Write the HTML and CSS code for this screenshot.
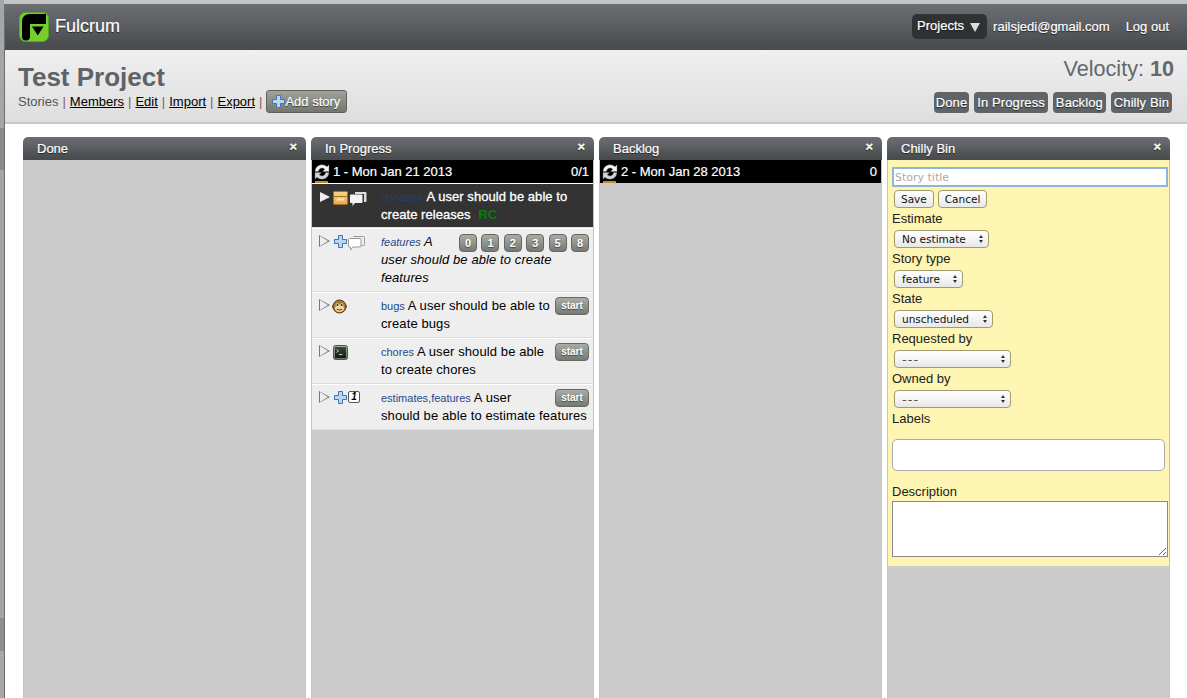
FILE: index.html
```html
<!DOCTYPE html>
<html lang="en">
<head>
    <meta charset="UTF-8">
    <meta name="viewport" content="width=device-width, initial-scale=1.0">
    <title>Test Project - Fulcrum</title>
    <link rel="stylesheet" href="styles.css">
</head>
<body>
    <svg class="defs" width="0" height="0">
        <defs>
            <linearGradient id="boxTop" x1="0" y1="0" x2="0" y2="1">
                <stop offset="0" stop-color="#fbd28a"/>
                <stop offset="1" stop-color="#e9a94f"/>
            </linearGradient>
            <linearGradient id="bezel" x1="0" y1="0" x2="0" y2="1">
                <stop offset="0" stop-color="#a8aca8"/>
                <stop offset="1" stop-color="#6c706c"/>
            </linearGradient>
            <linearGradient id="screen" x1="0" y1="0" x2="0" y2="1">
                <stop offset="0" stop-color="#3a4a38"/>
                <stop offset="1" stop-color="#121a12"/>
            </linearGradient>
            <symbol id="sync" viewBox="0 0 16 16">
                <path d="M1 7.500C1.500 3 4.500.8 8 .8c2.200 0 4 .8 5 2L15 .8v6.700H8.500l2.300-2.300C10 4.500 9 4.100 8 4.100c-1.900 0-3.200 1.300-3.600 3.400z" fill="#f4f4f4" stroke="#666" stroke-width=".4"/>
                <path d="M15 8.500c-.5 4.500-3.500 6.700-7 6.700-2.200 0-4-.8-5-2L1 15.200V8.500h6.500l-2.300 2.300c.8.700 1.800 1.100 2.800 1.100 1.900 0 3.200-1.300 3.600-3.400z" fill="#d4d4d4" stroke="#666" stroke-width=".4"/>
            </symbol>
            <symbol id="plus" viewBox="0 0 13 13">
                <path d="M4.500.5h4v4h4v4h-4v4h-4v-4h-4v-4h4z" fill="#bcd4ee" stroke="#3f74b5"/>
            </symbol>
            <symbol id="bubble" viewBox="0 0 17 16">
                <path d="M5.500 1.500h10a1 1 0 0 1 1 1v7a1 1 0 0 1-1 1h-2" fill="none" stroke="#999"/>
                <path d="M1.500 3.500h10.500a1 1 0 0 1 1 1v6.500a1 1 0 0 1-1 1H5l-2.500 3v-3h-1a1 1 0 0 1-1-1V4.500a1 1 0 0 1 1-1z" fill="#fff" stroke="#999"/>
            </symbol>
            <symbol id="bubble-filled" viewBox="0 0 17 16">
                <path d="M5 1h10.500a1 1 0 0 1 1 1v8a1 1 0 0 1-1 1H14V3H5z" fill="#ddd"/>
                <path d="M1 3.500h10.500a1 1 0 0 1 1 1v6.500a1 1 0 0 1-1 1H5l-2.500 3v-3H1a1 1 0 0 1-1-1V4.500a1 1 0 0 1 1-1z" fill="#f4f4f4"/>
            </symbol>
        </defs>
    </svg>

    <div class="window">
        <header class="topbar">
            <a class="brand" href="#">
                <svg class="logo" width="30" height="30" viewBox="0 0 30 30">
                    <rect x=".5" y=".5" width="29" height="29" rx="6" fill="#76cf2c" stroke="#5aa81c"/>
                    <path d="M3 24.500V10q0-8 8-8h16v10H11v12.500a4 4 0 0 1-8 0z" fill="#000"/>
                    <path d="M13 14.500h11.500l-5.700 9z" fill="#000"/>
                </svg>
                <span>Fulcrum</span>
            </a>
            <nav class="usernav">
                <a class="projects" href="#">Projects <span class="caret"></span></a>
                <a class="email" href="#">railsjedi@gmail.com</a>
                <a class="logout" href="#">Log out</a>
            </nav>
        </header>

        <section class="titlebar">
            <div>
                <h1>Test Project</h1>
                <div class="projectnav">
                    <span>Stories</span><i>|</i>
                    <a href="#">Members</a><i>|</i>
                    <a href="#">Edit</a><i>|</i>
                    <a href="#">Import</a><i>|</i>
                    <a href="#">Export</a><i>|</i>
                    <a class="addstory" href="#"><svg width="13" height="13"><use href="#plus"/></svg>Add story</a>
                </div>
            </div>
            <div class="titleright">
                <div class="velocity">Velocity: <b>10</b></div>
                <div class="toggles">
                    <a href="#">Done</a>
                    <a href="#">In Progress</a>
                    <a href="#">Backlog</a>
                    <a href="#">Chilly Bin</a>
                </div>
            </div>
        </section>

        <main class="columns">
            <section class="column">
                <div class="colhead">Done<span class="close">×</span></div>
                <div class="colbody"></div>
            </section>

            <section class="column">
                <div class="colhead">In Progress<span class="close">×</span></div>
                <div class="colbody">
                    <div class="iteration">
                        <svg width="16" height="16"><use href="#sync"/></svg>
                        <span>1 - Mon Jan 21 2013</span>
                        <span class="points">0/1</span>
                    </div>

                    <article class="story dark">
                        <div class="icons">
                            <span class="tri filled"></span>
                            <svg class="pull" width="15" height="14" viewBox="0 0 15 14">
                                <rect x=".5" y=".5" width="14" height="13" rx="1" fill="url(#boxTop)" stroke="#a8701f"/>
                                <path d="M.5 5.500h14" stroke="#a8701f"/>
                                <rect x="4" y="7.500" width="7" height="2" fill="#fde7be"/>
                            </svg>
                            <svg width="17" height="16"><use href="#bubble-filled"/></svg>
                        </div>
                        <div class="text"><span class="labels">releases</span> A user should be able to create releases <b class="rc">RC</b></div>
                    </article>

                    <article class="story">
                        <div class="icons">
                            <span class="tri"></span>
                            <svg width="13" height="13"><use href="#plus"/></svg>
                            <svg width="17" height="16"><use href="#bubble"/></svg>
                        </div>
                        <div class="text">
                            <div class="estimates">
                                <a href="#">0</a><a href="#">1</a><a href="#">2</a><a href="#">3</a><a href="#">5</a><a href="#">8</a>
                            </div>
                            <em><span class="labels">features</span> A user should be able to create features</em>
                        </div>
                    </article>

                    <article class="story">
                        <div class="icons">
                            <span class="tri"></span>
                            <svg class="pull2" width="15" height="15" viewBox="0 0 15 15">
                                <circle cx="1.800" cy="7.500" r="1.600" fill="#d9a765" stroke="#5e3c15" stroke-width=".6"/>
                                <circle cx="13.200" cy="7.500" r="1.600" fill="#d9a765" stroke="#5e3c15" stroke-width=".6"/>
                                <circle cx="7.500" cy="7.500" r="6.500" fill="#a8753a" stroke="#5e3c15"/>
                                <ellipse cx="7.500" cy="9.300" rx="4.600" ry="3.700" fill="#f2d49e"/>
                                <ellipse cx="5.300" cy="6" rx="1.700" ry="1.800" fill="#f2d49e"/>
                                <ellipse cx="9.700" cy="6" rx="1.700" ry="1.800" fill="#f2d49e"/>
                                <circle cx="5.400" cy="6" r=".9" fill="#222"/>
                                <circle cx="9.600" cy="6" r=".9" fill="#222"/>
                                <path d="M4.800 10.200q2.700 1.600 5.400 0" fill="none" stroke="#5e3c15"/>
                            </svg>
                        </div>
                        <div class="text"><a class="start" href="#">start</a><span class="labels">bugs</span> A user should be able to create bugs</div>
                    </article>

                    <article class="story">
                        <div class="icons">
                            <span class="tri"></span>
                            <svg class="pull" width="15" height="15" viewBox="0 0 15 15">
                                <rect x=".5" y=".5" width="14" height="14" rx="2" fill="url(#bezel)" stroke="#555"/>
                                <rect x="2" y="2" width="11" height="11" fill="url(#screen)"/>
                                <path d="M3.500 4.500l2 1.500-2 1.500M6 9.500h3.500" fill="none" stroke="#e4efe0" stroke-width=".8"/>
                            </svg>
                        </div>
                        <div class="text"><a class="start" href="#">start</a><span class="labels">chores</span> A user should be able to create chores</div>
                    </article>

                    <article class="story">
                        <div class="icons">
                            <span class="tri"></span>
                            <svg width="13" height="13"><use href="#plus"/></svg>
                            <span class="pointsicon">1</span>
                        </div>
                        <div class="text"><a class="start" href="#">start</a><span class="labels">estimates,features</span> A user should be able to estimate features</div>
                    </article>
                </div>
            </section>

            <section class="column">
                <div class="colhead">Backlog<span class="close">×</span></div>
                <div class="colbody">
                    <div class="iteration">
                        <svg width="16" height="16"><use href="#sync"/></svg>
                        <span>2 - Mon Jan 28 2013</span>
                        <span class="points">0</span>
                    </div>
                </div>
            </section>

            <section class="column">
                <div class="colhead">Chilly Bin<span class="close">×</span></div>
                <div class="colbody">
                    <form class="storyform" onsubmit="return false;">
                        <input class="title" type="text" placeholder="Story title">
                        <div class="actions">
                            <button type="button">Save</button>
                            <button type="button">Cancel</button>
                        </div>
                        <label>Estimate</label>
                        <div class="selectwrap"><select class="w95"><option>No estimate</option></select></div>
                        <label>Story type</label>
                        <div class="selectwrap"><select class="w69"><option>feature</option></select></div>
                        <label>State</label>
                        <div class="selectwrap"><select class="w99"><option>unscheduled</option></select></div>
                        <label>Requested by</label>
                        <div class="selectwrap"><select class="w117 blank"><option>---</option></select></div>
                        <label>Owned by</label>
                        <div class="selectwrap"><select class="w117 blank"><option>---</option></select></div>
                        <label>Labels</label>
                        <input class="labelsinput" type="text">
                        <label class="desclabel">Description</label>
                        <textarea></textarea>
                    </form>
                </div>
            </section>
        </main>
    </div>
</body>
</html>
```
FILE: styles.css
```css
* {
    box-sizing: border-box;
}
html, body {
    height: 100%;
    margin: 0;
}
body {
    background-color: #c4c4c4;
    background-image: linear-gradient(#a4a6a9 128px, #8c8c8c 128px, #8c8c8c 170px, #a2a4a8 170px, #a2a4a8 618px, #8e8e8e 618px, #8e8e8e 651px, #a8a8a8 651px);
    background-repeat: no-repeat;
    background-size: 4px 100%;
    font-family: "Liberation Sans", Arial, sans-serif;
    font-size: 13px;
    overflow: hidden;
    padding: 4px 0 0 4px;
}
a {
    color: inherit;
    text-decoration: none;
}
.defs {
    position: absolute;
}
.window {
    background-color: #fff;
    border-left: 1px solid #6e6e6e;
    display: flex;
    flex-direction: column;
    height: 100%;
}

/* top bar */
.topbar {
    align-items: center;
    background: linear-gradient(#6b6f74, #47494b);
    color: #fff;
    display: flex;
    flex: none;
    height: 46px;
    justify-content: space-between;
    padding: 0 18px 0 14px;
    text-shadow: 0 1px 1px #222;
    -webkit-text-stroke: .2px;
}
.brand {
    align-items: center;
    display: flex;
    font-size: 18px;
    gap: 6px;
}
.brand span {
    margin-top: -1px;
}
.usernav {
    align-items: center;
    display: flex;
    margin-top: -2px;
}
.projects {
    align-items: center;
    background-color: #303133;
    border-radius: 5px;
    display: flex;
    gap: 6px;
    height: 25px;
    padding: 0 0 1px 5px;
    width: 75px;
}
.caret {
    border-left: 5px solid transparent;
    border-right: 5px solid transparent;
    border-top: 9px solid #ddd;
    margin-top: 4px;
}
.email {
    margin-left: 6px;
}
.logout {
    margin-left: 16px;
}

/* project title bar */
.titlebar {
    background: linear-gradient(#efefef, #dedede);
    border-bottom: 2px solid #c8c8c8;
    display: flex;
    flex: none;
    height: 74px;
    justify-content: space-between;
    padding: 13px 13px 0 13px;
}
h1 {
    color: #5f6266;
    font-size: 26px;
    line-height: 28px;
    margin: 0;
}
.projectnav {
    align-items: center;
    color: #555;
    display: flex;
    height: 23px;
    margin-top: -1px;
}
.projectnav a {
    color: #000;
    text-decoration: underline;
}
.projectnav i {
    color: #8a5a5a;
    font-style: normal;
    margin: 0 4px;
}
.projectnav .addstory {
    align-items: center;
    background: linear-gradient(#a0a39c, #74776f);
    border: 1px solid #5e615c;
    border-radius: 3px;
    color: #fff;
    display: flex;
    height: 23px;
    padding: 0 6px 0 5px;
    text-decoration: none;
    text-shadow: 0 1px 1px #333;
    -webkit-text-stroke: .2px;
}
.titleright {
    align-items: flex-end;
    display: flex;
    flex-direction: column;
}
.velocity {
    color: #65686c;
    font-size: 21.600px;
    line-height: 24px;
    margin-top: -6px;
}
.toggles {
    display: flex;
    gap: 5px;
    margin: 11px 2px 0 0;
}
.toggles a {
    background-color: #5f6468;
    border-radius: 4px;
    color: #fff;
    height: 21px;
    letter-spacing: .1px;
    line-height: 21px;
    padding: 0 3px;
    text-shadow: 0 1px 1px #222;
    -webkit-text-stroke: .2px;
}
.toggles a:first-child {
    padding: 0 2px;
}

/* columns */
.columns {
    display: flex;
    flex: 1;
    gap: 5px;
    min-height: 0;
    padding: 13px 0 0 18px;
}
.column {
    display: flex;
    flex: none;
    flex-direction: column;
    width: 283px;
}
.colhead {
    background: linear-gradient(#6b6f74, #47494b);
    border-radius: 5px 5px 0 0;
    color: #fff;
    flex: none;
    height: 23px;
    line-height: 23px;
    padding-left: 14px;
    position: relative;
    text-shadow: 0 1px 1px #222;
    -webkit-text-stroke: .2px;
}
.close {
    font-size: 13px;
    font-weight: bold;
    position: absolute;
    right: 9px;
    top: -2px;
}
.colbody {
    background-color: #ccc;
    border: solid #c4c4c4;
    border-width: 0 1px;
    flex: 1;
}
.iteration {
    align-items: center;
    background-color: #000;
    color: #fff;
    display: flex;
    gap: 3px;
    height: 23px;
    padding: 0 4px 0 2px;
    position: relative;
    -webkit-text-stroke: .2px;
}
.iteration::after {
    background-color: #c98a2a;
    bottom: 0;
    content: "";
    height: 2px;
    left: 3px;
    position: absolute;
    width: 13px;
}
.points {
    margin-left: auto;
}

/* stories */
.story {
    background-color: #eee;
    border-bottom: 1px solid #ddd;
    border-top: 1px solid #fff;
    display: flex;
    letter-spacing: .1px;
    line-height: 18px;
    padding: 4px 4px 4px 6px;
}
.story.dark {
    background-color: #333;
    color: #fff;
    letter-spacing: .05px;
    padding: 4px 4px 3px 6px;
    -webkit-text-stroke: .3px;
}
.icons {
    align-items: flex-start;
    display: flex;
    flex: none;
    gap: 1px;
    padding-top: 2px;
    width: 63px;
}
.dark .icons {
    padding-top: 3px;
}
.pull {
    margin-left: -1px;
    margin-right: 1px;
}
.pull2 {
    margin-left: -2px;
}
.tri {
    border-bottom: 6.500px solid transparent;
    border-left: 11px solid #777;
    border-top: 6.500px solid transparent;
    margin: 0 3px 0 1px;
    position: relative;
}
.tri::after {
    border-bottom: 5px solid transparent;
    border-left: 8px solid #eee;
    border-top: 5px solid transparent;
    content: "";
    left: -10px;
    position: absolute;
    top: -5px;
}
.tri.filled {
    border-bottom-width: 5.500px;
    border-left-color: #eee;
    border-left-width: 10px;
    border-top-width: 5.500px;
    margin: 1px 3px 0 2px;
}
.tri.filled::after {
    display: none;
}
.pointsicon {
    background-color: #fff;
    border: 1px solid #555;
    border-radius: 2px;
    font-size: 10px;
    font-style: italic;
    font-weight: bold;
    height: 12px;
    letter-spacing: 0;
    line-height: 10px;
    text-align: center;
    width: 12px;
}
.text {
    flex: 1;
}
.labels {
    color: #1f4a8c;
    font-size: 11px;
    letter-spacing: 0;
    -webkit-text-stroke: 0;
}
.dark .labels {
    color: #1f3f7a;
    margin-right: 1px;
}
.rc {
    color: #0a7a0a;
    margin-left: 4px;
    -webkit-text-stroke: 0;
}
.estimates {
    display: flex;
    float: right;
    gap: 4.400px;
    margin: 1px 0 -3px 4px;
}
.estimates a, .start {
    background: linear-gradient(#a9aca5, #777a72);
    border: 1px solid #66695f;
    border-radius: 4px;
    color: #fff;
    font-size: 11px;
    font-style: normal;
    font-weight: bold;
    letter-spacing: 0;
    text-align: center;
    text-shadow: 0 1px 1px #444;
}
.estimates a {
    height: 18px;
    line-height: 16px;
    width: 18px;
}
.start {
    float: right;
    font-size: 10px;
    height: 18px;
    line-height: 16px;
    margin: 0 0 -3px 4px;
    width: 34px;
}

/* new story form */
.storyform {
    background-color: #fdf5b1;
    color: #222;
    height: 406px;
    line-height: 18px;
    padding: 7px 0 0 4px;
}
.storyform label {
    display: block;
    height: 18px;
}
.storyform input, .storyform textarea {
    background-color: #fff;
    display: block;
    margin: 0;
}
.title {
    border: 2px solid #8fb6d8;
    font-family: "DejaVu Sans", sans-serif;
    font-size: 11px;
    height: 20px;
    padding: 0 1px;
    width: 276px;
}
.title::placeholder {
    color: #aaa;
}
.actions {
    display: flex;
    gap: 4px;
    height: 18px;
    margin: 3px 0 2px 2px;
}
.actions button, .storyform select {
    appearance: none;
    background: linear-gradient(#fff, #e8e8e8);
    border: 1px solid #a09a70;
    border-radius: 4px;
    color: #111;
    font-family: "DejaVu Sans", sans-serif;
    font-size: 10.500px;
    height: 18px;
    padding: 0 7px;
}
.actions button {
    padding: 0 6px;
}
.selectwrap {
    height: 22px;
    margin-left: 2px;
    padding-top: 2px;
    position: relative;
    width: fit-content;
}
.selectwrap select {
    display: block;
}
.selectwrap select.blank {
    color: #555;
    font-size: 13px;
    letter-spacing: 1px;
}
.selectwrap::before, .selectwrap::after {
    border-left: 2.500px solid transparent;
    border-right: 2.500px solid transparent;
    content: "";
    position: absolute;
    right: 6px;
}
.selectwrap::before {
    border-bottom: 3px solid #333;
    top: 7px;
}
.selectwrap::after {
    border-top: 3px solid #333;
    top: 12px;
}
.w95 { width: 95px; }
.w69 { width: 69px; }
.w99 { width: 99px; }
.w117 { width: 117px; }
.storyform .labelsinput {
    border: 1px solid #aaa;
    border-radius: 5px;
    height: 32px;
    margin-top: 11px;
    width: 273px;
}
.storyform .desclabel {
    margin-top: 12px;
}
.storyform textarea {
    border: 1px solid #888;
    height: 56px;
    width: 276px;
}
```
